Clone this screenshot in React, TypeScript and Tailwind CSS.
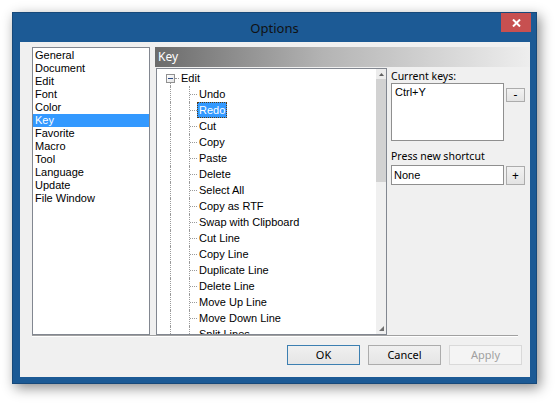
const categories = [
  'General',
  'Document',
  'Edit',
  'Font',
  'Color',
  'Key',
  'Favorite',
  'Macro',
  'Tool',
  'Language',
  'Update',
  'File Window',
]

const commands = [
  'Undo',
  'Redo',
  'Cut',
  'Copy',
  'Paste',
  'Delete',
  'Select All',
  'Copy as RTF',
  'Swap with Clipboard',
  'Cut Line',
  'Copy Line',
  'Duplicate Line',
  'Delete Line',
  'Move Up Line',
  'Move Down Line',
  'Split Lines',
]

const tahoma = { fontFamily: '"Liberation Sans", Arial, sans-serif' }
const segoe = { fontFamily: '"Noto Sans", "Open Sans", sans-serif' }

const dots = 'border-dotted border-[#9a9a9a]'

const CategoryList = () => (
  <div className="h-[288px] w-[118px] border border-[#828790] bg-white pt-[1px] text-[11px] text-black" style={tahoma}>
    {categories.map((name) => (
      <div
        key={name}
        className={`h-[13px] whitespace-nowrap pl-[2px] leading-[13px] ${name === 'Key' ? 'bg-[#3399ff] text-white' : ''}`}
      >
        {name}
      </div>
    ))}
  </div>
)

const RootRow = () => (
  <div className="flex h-[16px]">
    <div className="ml-[9px] flex w-[9px] flex-col">
      <div className="h-[4px]" />
      <div className="flex h-[9px] w-[9px] items-center justify-center border border-[#919191] bg-gradient-to-br from-white to-[#e4e4e4]">
        <div className="h-px w-[5px] bg-[#2c4a86]" />
      </div>
      <div className={`ml-[4px] flex-1 border-l ${dots}`} />
    </div>
    <div className="flex items-center">
      <div className={`w-[4px] border-t ${dots}`} />
    </div>
    <span className="h-[16px] border border-transparent px-[1px] leading-[14px]">Edit</span>
  </div>
)

const CommandRow = ({ label }: { label: string }) => {
  const selected = label === 'Redo'
  return (
    <div className="flex h-[16px]">
      <div className="w-[13px] shrink-0" />
      <div className={`w-[19px] shrink-0 border-l ${dots}`} />
      <div className={`flex w-[8px] shrink-0 items-center border-l ${dots}`}>
        <div className={`w-[7px] border-t ${dots}`} />
      </div>
      <span
        className={`h-[16px] whitespace-nowrap border px-[1px] leading-[14px] ${
          selected ? 'border-dotted border-[#5a3a10] bg-[#3399ff] text-white' : 'border-transparent'
        }`}
      >
        {label}
      </span>
    </div>
  )
}

const ScrollBar = () => (
  <div className="flex w-[10px] flex-col bg-[#ececec]">
    <div className="flex h-[10px] items-center justify-center">
      <svg width="5" height="3" viewBox="0 0 5 3">
        <polygon points="2.5,0 5,3 0,3" fill="#606060" />
      </svg>
    </div>
    <div className="h-[103px] bg-[#d2d2d2]" />
    <div className="flex-1 bg-[#f0f0f0]" />
    <div className="flex h-[8px] items-start justify-end bg-[#f0f0f0] pr-[2px]">
      <svg width="5" height="5" viewBox="0 0 5 5">
        <polygon points="5,0 5,5 0,5" fill="#707070" />
      </svg>
    </div>
  </div>
)

const KeyTree = () => (
  <div className="ml-[1px] mt-[1px] flex h-[267px] w-[231px] overflow-hidden border border-[#828790] bg-white text-[11px] text-black" style={tahoma}>
    <div className="flex-1 overflow-hidden pt-[1px]">
      <RootRow />
      {commands.map((c) => (
        <CommandRow key={c} label={c} />
      ))}
    </div>
    <ScrollBar />
  </div>
)

const SmallButton = ({ label, className }: { label: string; className: string }) => (
  <button
    className={`ml-[2px] flex w-[19px] items-center justify-center border border-[#acacac] bg-gradient-to-b from-[#f2f2f2] to-[#e3e3e3] text-[12px] leading-none text-black ${className}`}
    style={segoe}
  >
    {label}
  </button>
)

const ShortcutPanel = () => (
  <div className="ml-[4px] flex flex-col text-[10.5px] text-black" style={segoe}>
    <div className="mt-[2px] h-[14px] leading-[14px]">Current keys:</div>
    <div className="flex items-start">
      <div className="h-[58px] w-[113px] border border-[#8f8f8f] bg-white pl-[3px] pt-[1px] text-[11px] leading-[14px]" style={tahoma}>
        Ctrl+Y
      </div>
      <SmallButton label="-" className="mt-[5px] h-[14px]" />
    </div>
    <div className="mt-[8px] h-[14px] leading-[14px]">Press new shortcut</div>
    <div className="mt-[2px] flex items-start">
      <div className="h-[20px] w-[113px] border border-[#8f8f8f] bg-white pl-[2px] text-[11px] leading-[18px]" style={tahoma}>
        None
      </div>
      <SmallButton label="+" className="mt-[1px] h-[19px]" />
    </div>
  </div>
)

const DialogButton = ({ label, variant }: { label: string; variant: 'default' | 'normal' | 'disabled' }) => {
  const look =
    variant === 'default'
      ? 'border-[#3c7fb1] bg-gradient-to-b from-[#f0f0f0] to-[#e5e5e5] text-black'
      : variant === 'normal'
        ? 'border-[#acacac] bg-gradient-to-b from-[#f0f0f0] to-[#e5e5e5] text-black'
        : 'border-[#d9d9d9] bg-[#f4f4f4] text-[#a0a0a0]'
  return (
    <button className={`h-[20px] w-[73px] border text-[11px] leading-[18px] ${look}`} style={segoe}>
      {label}
    </button>
  )
}

export default function App() {
  return (
    <div className="h-[405px] w-[558px] overflow-hidden bg-white pl-[12px] pt-[12px]">
      <div className="flex h-[372px] w-[525px] flex-col border border-[#17497a] bg-[#1c5a95] shadow-[3px_4px_12px_rgba(0,0,0,0.45)]">
        <div className="flex h-[29px] items-start">
          <div className="w-[35px]" />
          <div className="flex-1 pt-[6px] text-center text-[13px] leading-[18px] text-[#111]" style={segoe}>
            Options
          </div>
          <button className="mr-[5px] flex h-[19px] w-[30px] items-center justify-center bg-[#c75050]">
            <svg width="9" height="8" viewBox="0 0 9 8">
              <path d="M1 0.5 L8 7.5 M8 0.5 L1 7.5" stroke="white" strokeWidth="2" />
            </svg>
          </button>
        </div>
        <div className="ml-[7px] mr-[6px] flex h-[335px] flex-col bg-[#f0f0f0]">
          <div className="flex pl-[12px] pt-[5px]">
            <CategoryList />
            <div className="ml-[5px] flex w-[375px] flex-col">
              <div
                className="h-[20px] pl-[3px] text-[12px] leading-[20px] text-white"
                style={{ ...segoe, backgroundImage: 'linear-gradient(to right, #6b6b6b, #b4b4b4 45%, #eeeeee)' }}
              >
                Key
              </div>
              <div className="flex">
                <KeyTree />
                <ShortcutPanel />
              </div>
            </div>
          </div>
          <div className="ml-[12px] h-[2px] w-[486px] border-b border-t border-b-white border-t-[#a0a0a0]" />
          <div className="mt-[8px] flex justify-end gap-[8px] pr-[8px]">
            <DialogButton label="OK" variant="default" />
            <DialogButton label="Cancel" variant="normal" />
            <DialogButton label="Apply" variant="disabled" />
          </div>
        </div>
      </div>
    </div>
  )
}
